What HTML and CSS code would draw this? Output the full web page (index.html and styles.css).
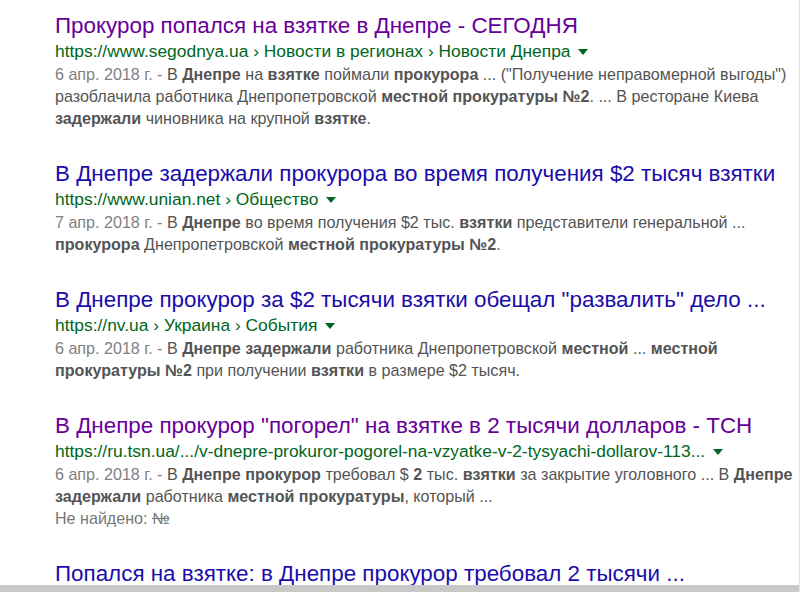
FILE: index.html
```html
<!DOCTYPE html>
<html lang="ru">
<head>
    <meta charset="UTF-8">
    <title>прокурор взятка днепр - Поиск</title>
    <link rel="stylesheet" href="styles.css">
</head>
<body>
<div class="results">

    <div class="res">
        <a class="title visited" href="#">Прокурор попался на взятке в Днепре - СЕГОДНЯ</a>
        <div class="url">https://www.segodnya.ua › Новости в регионах › Новости Днепра <span class="arrow"></span></div>
        <div class="snip"><span class="date">6 апр. 2018 г. - </span>В <b>Днепре</b> на <b>взятке</b> поймали <b>прокурора</b> ... ("Получение неправомерной выгоды")<br>разоблачила работника Днепропетровской <b>местной прокуратуры №2</b>. ... В ресторане Киева<br><b>задержали</b> чиновника на крупной <b>взятке</b>.</div>
    </div>

    <div class="res">
        <a class="title" href="#">В Днепре задержали прокурора во время получения $2 тысяч взятки</a>
        <div class="url">https://www.unian.net › Общество <span class="arrow"></span></div>
        <div class="snip"><span class="date">7 апр. 2018 г. - </span>В <b>Днепре</b> во время получения $2 тыс. <b>взятки</b> представители генеральной ...<br><b>прокурора</b> Днепропетровской <b>местной прокуратуры №2</b>.</div>
    </div>

    <div class="res">
        <a class="title" href="#">В Днепре прокурор за $2 тысячи взятки обещал "развалить" дело ...</a>
        <div class="url">https://nv.ua › Украина › События <span class="arrow"></span></div>
        <div class="snip"><span class="date">6 апр. 2018 г. - </span>В <b>Днепре задержали</b> работника Днепропетровской <b>местной</b> ... <b>местной</b><br><b>прокуратуры №2</b> при получении <b>взятки</b> в размере $2 тысяч.</div>
    </div>

    <div class="res">
        <a class="title visited" href="#">В Днепре прокурор "погорел" на взятке в 2 тысячи долларов - ТСН</a>
        <div class="url">https://ru.tsn.ua/.../v-dnepre-prokuror-pogorel-na-vzyatke-v-2-tysyachi-dollarov-113... <span class="arrow"></span></div>
        <div class="snip"><span class="date">6 апр. 2018 г. - </span>В <b>Днепре прокурор</b> требовал $ <b>2</b> тыс. <b>взятки</b> за закрытие уголовного ... В <b>Днепре</b><br><b>задержали</b> работника <b>местной прокуратуры</b>, который ...</div>
        <div class="missing">Не найдено: <s>№</s></div>
    </div>

    <div class="res">
        <a class="title" href="#">Попался на взятке: в Днепре прокурор требовал 2 тысячи ...</a>
    </div>

</div>
<div class="scrollbar"></div>
</body>
</html>
```

FILE: styles.css
```css
body{
    margin: 0;
    padding: 0;
    height: 592px;
    overflow: hidden;
    background: #fff;
    font-family: Arial, "Liberation Sans", sans-serif;
    position: relative;
    border-right: 1px solid #e4e4e4;
    box-sizing: border-box;
}

.results{
    padding: 12px 0 0 55px;
}

.res{
    margin-bottom: 31px;
}

.title{
    display: block;
    font-size: 22.4px;
    line-height: 27px;
    color: #1a0dab;
    text-decoration: none;
    white-space: nowrap;
}

.title.visited{
    color: #609;
}

.url{
    font-size: 17.4px;
    line-height: 24px;
    color: #006621;
    white-space: nowrap;
}

.arrow{
    display: inline-block;
    width: 0;
    height: 0;
    margin-left: 3px;
    border-left: 5px solid transparent;
    border-right: 5px solid transparent;
    border-top: 6px solid #006621;
    vertical-align: middle;
}

.snip{
    font-size: 16.1px;
    line-height: 22px;
    color: #545454;
    white-space: nowrap;
}

.date{
    color: #808080;
}

.missing{
    font-size: 16.1px;
    line-height: 22px;
    color: #777;
}

.scrollbar{
    position: absolute;
    left: 0;
    right: 0;
    bottom: 0;
    height: 7px;
    background: #c8c8c8;
}
```
